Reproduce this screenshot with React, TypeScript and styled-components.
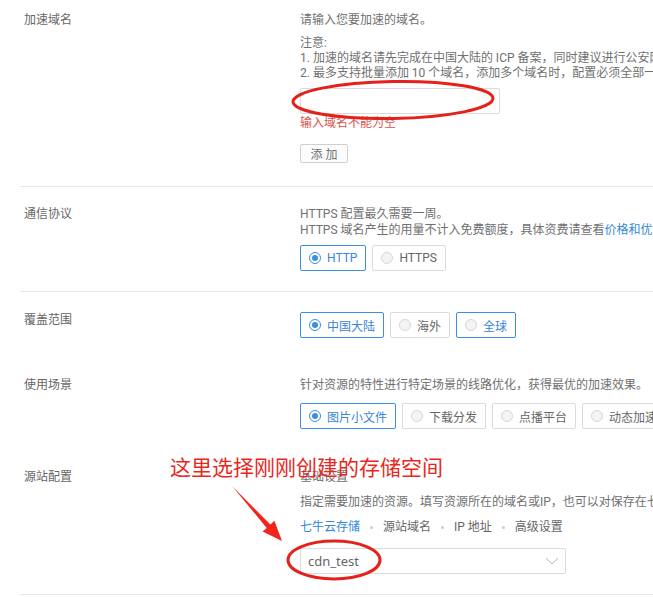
import React from "react"
import styled, { createGlobalStyle } from "styled-components"

const GlobalStyle = createGlobalStyle`
    body {
        margin: 0;
        background: #fff;
        font-family: Roboto, "Noto Sans CJK SC", sans-serif;
        font-size: 12px;
        color: #707070;
    }
`

const SCxPage = styled.div`
    position: relative;
    width: 653px;
    height: 597px;
    overflow: hidden;
    background: #fff;
`

const SCxSection = styled.div<{ $pt: number; $pb: number; $divider?: boolean }>`
    display: flex;
    margin-left: 20px;
    padding: ${p => p.$pt}px 0 ${p => p.$pb}px 4px;
    border-bottom: ${p => (p.$divider ? "1px solid #e6e6e6" : "none")};
`

const SCxLabel = styled.div`
    width: 276px;
    flex: none;
    line-height: 16px;
    color: #666;
`

const SCxContent = styled.div`
    flex: 1;
    min-width: 0;
    white-space: nowrap;
    display: flex;
    flex-direction: column;
    align-items: flex-start;
`

const SCxLine = styled.div<{ $mt?: number }>`
    line-height: 16px;
    margin-top: ${p => p.$mt || 0}px;
`

const SCxNote = styled.div`
    margin-top: 8px;
    line-height: 15px;
`

const SCxLink = styled.span`
    color: #2f87dc;
`

const SCxInput = styled.div`
    margin-top: 7px;
    width: 200px;
    height: 26px;
    box-sizing: border-box;
    border: 1px solid #dcdcdc;
    border-radius: 2px;
`

const SCxError = styled.div`
    margin-top: 1px;
    line-height: 16px;
    color: #d9534f;
`

const SCxButton = styled.div`
    margin-top: 13px;
    width: 48px;
    height: 19px;
    box-sizing: border-box;
    border: 1px solid #cfcfcf;
    border-radius: 2px;
    display: flex;
    align-items: center;
    justify-content: center;
    letter-spacing: 3px;
    padding-left: 3px;
    color: #707070;
    background: #fcfcfc;
`

const SCxRadioGroup = styled.div<{ $mt?: number }>`
    display: flex;
    gap: 6px;
    margin-top: ${p => p.$mt || 0}px;
`

const SCxRadio = styled.div<{ $active?: boolean; $hover?: boolean }>`
    height: 26px;
    box-sizing: border-box;
    display: inline-flex;
    align-items: center;
    gap: 6px;
    padding: 0 8px 0 8px;
    border: 1px solid ${p => (p.$active || p.$hover ? "#3a8ee6" : "#dcdcdc")};
    border-radius: 2px;
    color: ${p => (p.$active || p.$hover ? "#3a85d6" : "#666")};
    background: #fff;
`

const SCxDot = styled.span<{ $active?: boolean }>`
    width: 12px;
    height: 12px;
    box-sizing: border-box;
    border-radius: 50%;
    border: 1px solid ${p => (p.$active ? "#3a8ee6" : "#d6d6d6")};
    background: ${p => (p.$active ? "#fff" : "#f4f4f4")};
    display: flex;
    align-items: center;
    justify-content: center;

    &::after {
        content: "";
        width: 6px;
        height: 6px;
        border-radius: 50%;
        background: ${p => (p.$active ? "#3a8ee6" : "transparent")};
    }
`

const SCxTabs = styled.div`
    margin-top: 9px;
    display: flex;
    align-items: center;
    gap: 10px;
    line-height: 16px;
`

const SCxTab = styled.span<{ $active?: boolean }>`
    color: ${p => (p.$active ? "#2f87dc" : "#666")};
`

const SCxSep = styled.span`
    width: 3px;
    height: 3px;
    border-radius: 50%;
    background: #ccc;
`

const SCxSelect = styled.div`
    margin-top: 13px;
    width: 266px;
    height: 26px;
    box-sizing: border-box;
    border: 1px solid #dcdcdc;
    border-radius: 2px;
    display: flex;
    align-items: center;
    justify-content: space-between;
    padding: 0 6px 0 7px;
    font-family: "Noto Sans", sans-serif;
    font-size: 13px;
    color: #666;
`

const SCxOverlay = styled.svg`
    position: absolute;
    left: 0;
    top: 0;
    pointer-events: none;
`

const SCxCallout = styled.div`
    position: absolute;
    left: 170px;
    top: 453px;
    font-family: "Noto Sans CJK SC", sans-serif;
    font-size: 21px;
    line-height: 26px;
    color: #e8281e;
    white-space: nowrap;
`

const Radio = ({ label, active, hover }: { label: string; active?: boolean; hover?: boolean }) => (
    <SCxRadio $active={active} $hover={hover}>
        <SCxDot $active={active} />
        {label}
    </SCxRadio>
)

export default function App() {
    return (
        <SCxPage>
            <GlobalStyle />

            <SCxSection $pt={12} $pb={23} $divider>
                <SCxLabel>加速域名</SCxLabel>
                <SCxContent>
                    <SCxLine>请输入您要加速的域名。</SCxLine>
                    <SCxNote>
                        <div>注意:</div>
                        <div>1. 加速的域名请先完成在中国大陆的 ICP 备案，同时建议进行公安网备案。</div>
                        <div>2. 最多支持批量添加 10 个域名，添加多个域名时，配置必须全部一致。</div>
                    </SCxNote>
                    <SCxInput />
                    <SCxError>输入域名不能为空</SCxError>
                    <SCxButton>添加</SCxButton>
                </SCxContent>
            </SCxSection>

            <SCxSection $pt={19} $pb={20} $divider>
                <SCxLabel>通信协议</SCxLabel>
                <SCxContent>
                    <SCxLine>HTTPS 配置最久需要一周。</SCxLine>
                    <SCxLine>
                        HTTPS 域名产生的用量不计入免费额度，具体资费请查看<SCxLink>价格和优惠</SCxLink>。
                    </SCxLine>
                    <SCxRadioGroup $mt={7}>
                        <Radio label="HTTP" active />
                        <Radio label="HTTPS" />
                    </SCxRadioGroup>
                </SCxContent>
            </SCxSection>

            <SCxSection $pt={20} $pb={0}>
                <SCxLabel>覆盖范围</SCxLabel>
                <SCxContent>
                    <SCxRadioGroup>
                        <Radio label="中国大陆" active />
                        <Radio label="海外" />
                        <Radio label="全球" hover />
                    </SCxRadioGroup>
                </SCxContent>
            </SCxSection>

            <SCxSection $pt={39} $pb={0}>
                <SCxLabel>使用场景</SCxLabel>
                <SCxContent>
                    <SCxLine>针对资源的特性进行特定场景的线路优化，获得最优的加速效果。</SCxLine>
                    <SCxRadioGroup $mt={10}>
                        <Radio label="图片小文件" active />
                        <Radio label="下载分发" />
                        <Radio label="点播平台" />
                        <Radio label="动态加速" />
                    </SCxRadioGroup>
                </SCxContent>
            </SCxSection>

            <SCxSection $pt={40} $pb={20} $divider>
                <SCxLabel>源站配置</SCxLabel>
                <SCxContent>
                    <SCxLine>基础设置</SCxLine>
                    <SCxLine $mt={9}>
                        指定需要加速的资源。填写资源所在的域名或IP，也可以对保存在七牛云存储中的资源进行加速。
                    </SCxLine>
                    <SCxTabs>
                        <SCxTab $active>七牛云存储</SCxTab>
                        <SCxSep />
                        <SCxTab>源站域名</SCxTab>
                        <SCxSep />
                        <SCxTab>IP 地址</SCxTab>
                        <SCxSep />
                        <SCxTab>高级设置</SCxTab>
                    </SCxTabs>
                    <SCxSelect>
                        <span>cdn_test</span>
                        <svg width="14" height="8" viewBox="0 0 14 8">
                            <path d="M1 1 L7 7 L13 1" fill="none" stroke="#bbb" strokeWidth="1" />
                        </svg>
                    </SCxSelect>
                </SCxContent>
            </SCxSection>

            <SCxOverlay width="653" height="597" viewBox="0 0 653 597">
                <ellipse cx="393" cy="100" rx="100" ry="18.5" fill="none" stroke="#e3231b" strokeWidth="3" transform="rotate(-1 393 100)" />
                <ellipse cx="334" cy="560" rx="46" ry="19" fill="none" stroke="#e3231b" strokeWidth="3" />
                <polygon
                    points="232,486 270.4,524.5 274.4,520.8 282,541 262.6,531.6 266.7,527.9"
                    fill="#f0261c"
                />
            </SCxOverlay>
            <SCxCallout>这里选择刚刚创建的存储空间</SCxCallout>
        </SCxPage>
    )
}
